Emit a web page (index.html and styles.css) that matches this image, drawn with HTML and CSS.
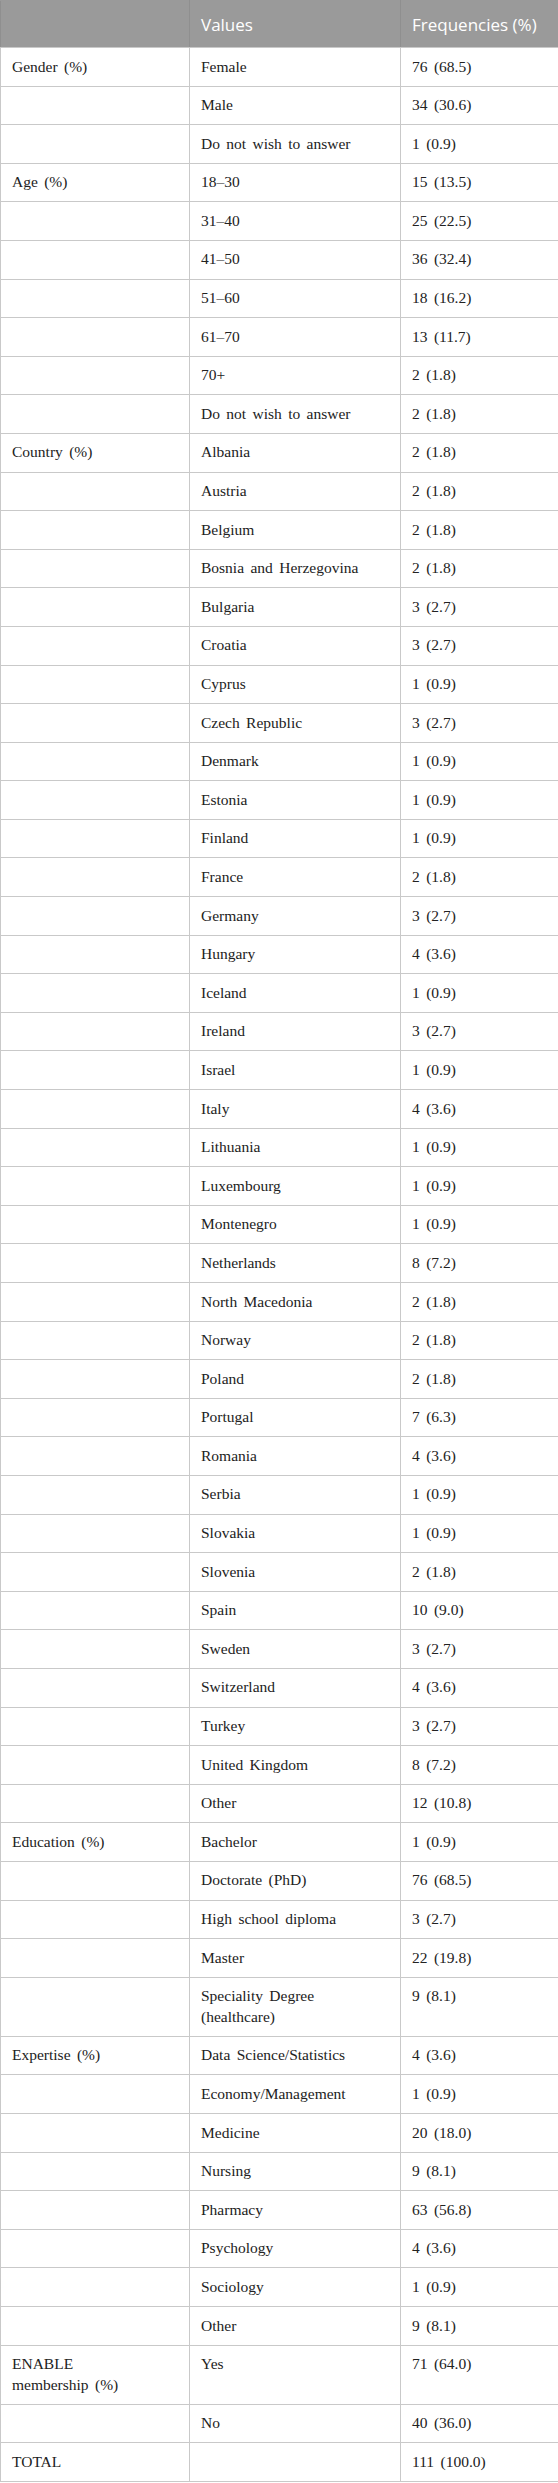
FILE: index.html
```html
<!DOCTYPE html>
<html lang="en">
<head>
<meta charset="utf-8">
<title>Respondent characteristics</title>
<link rel="stylesheet" href="styles.css">
</head>
<body>
<table class="stats">
  <colgroup>
    <col class="c1">
    <col class="c2">
    <col class="c3">
  </colgroup>
  <thead>
    <tr><th></th><th>Values</th><th>Frequencies (%)</th></tr>
  </thead>
  <tbody>
    <tr><td>Gender (%)</td><td>Female</td><td>76 (68.5)</td></tr>
    <tr><td></td><td>Male</td><td>34 (30.6)</td></tr>
    <tr><td></td><td>Do not wish to answer</td><td>1 (0.9)</td></tr>
    <tr><td>Age (%)</td><td>18–30</td><td>15 (13.5)</td></tr>
    <tr><td></td><td>31–40</td><td>25 (22.5)</td></tr>
    <tr><td></td><td>41–50</td><td>36 (32.4)</td></tr>
    <tr><td></td><td>51–60</td><td>18 (16.2)</td></tr>
    <tr><td></td><td>61–70</td><td>13 (11.7)</td></tr>
    <tr><td></td><td>70+</td><td>2 (1.8)</td></tr>
    <tr><td></td><td>Do not wish to answer</td><td>2 (1.8)</td></tr>
    <tr><td>Country (%)</td><td>Albania</td><td>2 (1.8)</td></tr>
    <tr><td></td><td>Austria</td><td>2 (1.8)</td></tr>
    <tr><td></td><td>Belgium</td><td>2 (1.8)</td></tr>
    <tr><td></td><td>Bosnia and Herzegovina</td><td>2 (1.8)</td></tr>
    <tr><td></td><td>Bulgaria</td><td>3 (2.7)</td></tr>
    <tr><td></td><td>Croatia</td><td>3 (2.7)</td></tr>
    <tr><td></td><td>Cyprus</td><td>1 (0.9)</td></tr>
    <tr><td></td><td>Czech Republic</td><td>3 (2.7)</td></tr>
    <tr><td></td><td>Denmark</td><td>1 (0.9)</td></tr>
    <tr><td></td><td>Estonia</td><td>1 (0.9)</td></tr>
    <tr><td></td><td>Finland</td><td>1 (0.9)</td></tr>
    <tr><td></td><td>France</td><td>2 (1.8)</td></tr>
    <tr><td></td><td>Germany</td><td>3 (2.7)</td></tr>
    <tr><td></td><td>Hungary</td><td>4 (3.6)</td></tr>
    <tr><td></td><td>Iceland</td><td>1 (0.9)</td></tr>
    <tr><td></td><td>Ireland</td><td>3 (2.7)</td></tr>
    <tr><td></td><td>Israel</td><td>1 (0.9)</td></tr>
    <tr><td></td><td>Italy</td><td>4 (3.6)</td></tr>
    <tr><td></td><td>Lithuania</td><td>1 (0.9)</td></tr>
    <tr><td></td><td>Luxembourg</td><td>1 (0.9)</td></tr>
    <tr><td></td><td>Montenegro</td><td>1 (0.9)</td></tr>
    <tr><td></td><td>Netherlands</td><td>8 (7.2)</td></tr>
    <tr><td></td><td>North Macedonia</td><td>2 (1.8)</td></tr>
    <tr><td></td><td>Norway</td><td>2 (1.8)</td></tr>
    <tr><td></td><td>Poland</td><td>2 (1.8)</td></tr>
    <tr><td></td><td>Portugal</td><td>7 (6.3)</td></tr>
    <tr><td></td><td>Romania</td><td>4 (3.6)</td></tr>
    <tr><td></td><td>Serbia</td><td>1 (0.9)</td></tr>
    <tr><td></td><td>Slovakia</td><td>1 (0.9)</td></tr>
    <tr><td></td><td>Slovenia</td><td>2 (1.8)</td></tr>
    <tr><td></td><td>Spain</td><td>10 (9.0)</td></tr>
    <tr><td></td><td>Sweden</td><td>3 (2.7)</td></tr>
    <tr><td></td><td>Switzerland</td><td>4 (3.6)</td></tr>
    <tr><td></td><td>Turkey</td><td>3 (2.7)</td></tr>
    <tr><td></td><td>United Kingdom</td><td>8 (7.2)</td></tr>
    <tr><td></td><td>Other</td><td>12 (10.8)</td></tr>
    <tr><td>Education (%)</td><td>Bachelor</td><td>1 (0.9)</td></tr>
    <tr><td></td><td>Doctorate (PhD)</td><td>76 (68.5)</td></tr>
    <tr><td></td><td>High school diploma</td><td>3 (2.7)</td></tr>
    <tr><td></td><td>Master</td><td>22 (19.8)</td></tr>
    <tr><td></td><td>Speciality Degree<br>(healthcare)</td><td>9 (8.1)</td></tr>
    <tr><td>Expertise (%)</td><td>Data Science/Statistics</td><td>4 (3.6)</td></tr>
    <tr><td></td><td>Economy/Management</td><td>1 (0.9)</td></tr>
    <tr><td></td><td>Medicine</td><td>20 (18.0)</td></tr>
    <tr><td></td><td>Nursing</td><td>9 (8.1)</td></tr>
    <tr><td></td><td>Pharmacy</td><td>63 (56.8)</td></tr>
    <tr><td></td><td>Psychology</td><td>4 (3.6)</td></tr>
    <tr><td></td><td>Sociology</td><td>1 (0.9)</td></tr>
    <tr><td></td><td>Other</td><td>9 (8.1)</td></tr>
    <tr><td>ENABLE<br>membership (%)</td><td>Yes</td><td>71 (64.0)</td></tr>
    <tr><td></td><td>No</td><td>40 (36.0)</td></tr>
    <tr><td>TOTAL</td><td></td><td>111 (100.0)</td></tr>
  </tbody>
</table>
</body>
</html>
```

FILE: styles.css
```css
html, body {
  margin: 0;
  padding: 0;
  background: #ffffff;
}

.stats {
  width: 558px;
  table-layout: fixed;
  border-collapse: collapse;
  font-family: "Liberation Serif", "Times New Roman", serif;
  font-size: 15.5px;
  color: #222222;
}

.stats .c1 { width: 189px; }
.stats .c2 { width: 211px; }
.stats .c3 { width: 158px; }

.stats th {
  background: #9a9a9a;
  color: #ffffff;
  font-family: "Open Sans", "Noto Sans", sans-serif;
  font-weight: 400;
  font-size: 17px;
  line-height: 24px;
  text-align: left;
  padding: 12px 10px 10px 11px;
  border: 1px solid #8f8f8f;
  border-top-color: #9a9a9a;
  border-bottom-color: #c9c9c9;
}

.stats td {
  padding: 8.5px 10px 8.5px 11px;
  line-height: 20.6px;
  vertical-align: top;
  border: 1px solid #c9c9c9;
  word-spacing: 2.5px;
}
```
